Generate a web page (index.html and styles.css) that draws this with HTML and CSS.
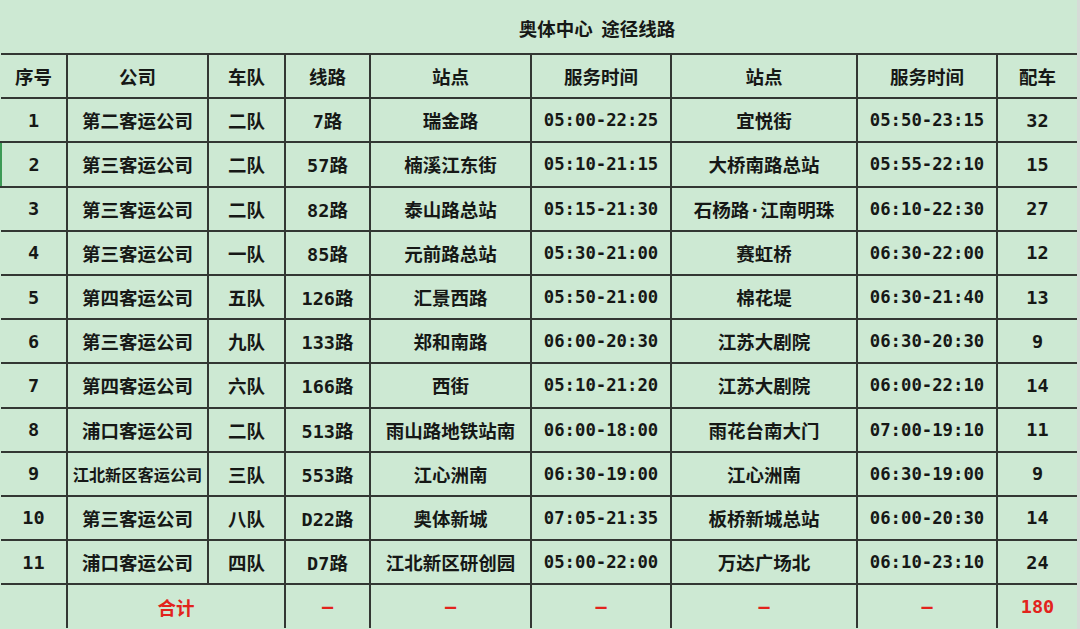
FILE: index.html
```html
<!DOCTYPE html>
<html lang="zh-CN">
<head>
<meta charset="utf-8">
<title>奥体中心 途径线路</title>
<link rel="stylesheet" href="styles.css">
</head>
<body>
<div class="sheet">
  <div class="title">奥体中心&nbsp;&nbsp;途径线路</div>
  <table class="routes">
    <colgroup>
      <col class="c-no"><col class="c-co"><col class="c-team"><col class="c-line">
      <col class="c-stop"><col class="c-time"><col class="c-stop2"><col class="c-time2"><col class="c-cars">
    </colgroup>
    <thead>
      <tr><th class="first">序号</th><th>公司</th><th>车队</th><th>线路</th><th>站点</th><th>服务时间</th><th>站点</th><th>服务时间</th><th>配车</th></tr>
    </thead>
    <tbody>
      <tr><td class="first">1</td><td>第二客运公司</td><td>二队</td><td>7路</td><td>瑞金路</td><td class="time">05:00-22:25</td><td>宜悦街</td><td class="time">05:50-23:15</td><td>32</td></tr>
      <tr><td class="first sel">2</td><td>第三客运公司</td><td>二队</td><td>57路</td><td>楠溪江东街</td><td class="time">05:10-21:15</td><td>大桥南路总站</td><td class="time">05:55-22:10</td><td>15</td></tr>
      <tr><td class="first">3</td><td>第三客运公司</td><td>二队</td><td>82路</td><td>泰山路总站</td><td class="time">05:15-21:30</td><td>石杨路·江南明珠</td><td class="time">06:10-22:30</td><td>27</td></tr>
      <tr><td class="first">4</td><td>第三客运公司</td><td>一队</td><td>85路</td><td>元前路总站</td><td class="time">05:30-21:00</td><td>赛虹桥</td><td class="time">06:30-22:00</td><td>12</td></tr>
      <tr><td class="first">5</td><td>第四客运公司</td><td>五队</td><td>126路</td><td>汇景西路</td><td class="time">05:50-21:00</td><td>棉花堤</td><td class="time">06:30-21:40</td><td>13</td></tr>
      <tr><td class="first">6</td><td>第三客运公司</td><td>九队</td><td>133路</td><td>郑和南路</td><td class="time">06:00-20:30</td><td>江苏大剧院</td><td class="time">06:30-20:30</td><td>9</td></tr>
      <tr><td class="first">7</td><td>第四客运公司</td><td>六队</td><td>166路</td><td>西街</td><td class="time">05:10-21:20</td><td>江苏大剧院</td><td class="time">06:00-22:10</td><td>14</td></tr>
      <tr><td class="first">8</td><td>浦口客运公司</td><td>二队</td><td>513路</td><td>雨山路地铁站南</td><td class="time">06:00-18:00</td><td>雨花台南大门</td><td class="time">07:00-19:10</td><td>11</td></tr>
      <tr><td class="first">9</td><td class="small">江北新区客运公司</td><td>三队</td><td>553路</td><td>江心洲南</td><td class="time">06:30-19:00</td><td>江心洲南</td><td class="time">06:30-19:00</td><td>9</td></tr>
      <tr><td class="first">10</td><td>第三客运公司</td><td>八队</td><td>D22路</td><td>奥体新城</td><td class="time">07:05-21:35</td><td>板桥新城总站</td><td class="time">06:00-20:30</td><td>14</td></tr>
      <tr><td class="first">11</td><td>浦口客运公司</td><td>四队</td><td>D7路</td><td>江北新区研创园</td><td class="time">05:00-22:00</td><td>万达广场北</td><td class="time">06:10-23:10</td><td>24</td></tr>
      <tr class="total"><td class="first"></td><td colspan="2">合计</td><td>–</td><td>–</td><td>–</td><td>–</td><td>–</td><td>180</td></tr>
    </tbody>
  </table>
</div>
</body>
</html>
```

FILE: styles.css
```css
html, body {
  margin: 0;
  padding: 0;
  background: #cde9d3;
}

body {
  width: 1080px;
  height: 629px;
  overflow: hidden;
  font-family: "DejaVu Sans Mono", "Noto Sans CJK SC", monospace;
  font-weight: 700;
  color: #161816;
}

.sheet {
  width: 1077px;
  height: 629px;
  border-right: 3px solid #d6dbd7;
  overflow: hidden;
}

.title {
  height: 54px;
  display: flex;
  align-items: center;
  justify-content: center;
  padding-left: 117px;
  padding-top: 1px;
  box-sizing: border-box;
  font-size: 18.5px;
  font-family: "Noto Sans CJK SC", sans-serif;
  font-weight: 700;
}

.routes {
  width: 1077px;
  table-layout: fixed;
  border-collapse: collapse;
  margin-top: -1px;
}

.c-no { width: 66px; }
.c-co { width: 141px; }
.c-team { width: 77px; }
.c-line { width: 85px; }
.c-stop { width: 161px; }
.c-time { width: 140px; }
.c-stop2 { width: 186px; }
.c-time2 { width: 140px; }
.c-cars { width: 81px; }

.routes tr {
  height: 44.2px;
}

.routes th,
.routes td {
  border: 2px solid #333733;
  padding: 0;
  text-align: center;
  vertical-align: middle;
  font-size: 18.5px;
  font-weight: 700;
  white-space: nowrap;
}

.routes th {
  font-family: "Noto Sans CJK SC", sans-serif;
}

.routes .first {
  border-left: none;
}

.routes .sel {
  border-left: 2px solid #3c9a55;
}

.routes .time {
  font-size: 17.3px;
}

.routes .small {
  font-size: 16.2px;
}

.routes .total td {
  color: #e2231c;
  border-bottom: none;
}
```
